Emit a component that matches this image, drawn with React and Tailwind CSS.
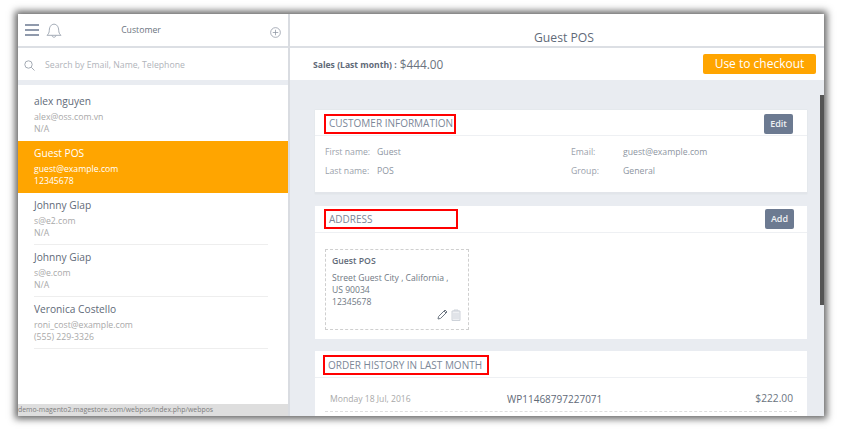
import React from "react";

const customers = [
  { name: "alex nguyen", email: "alex@oss.com.vn", phone: "N/A" },
  { name: "Guest POS", email: "guest@example.com", phone: "12345678", active: true },
  { name: "Johnny Glap", email: "s@e2.com", phone: "N/A", line: true },
  { name: "Johnny Giap", email: "s@e.com", phone: "N/A", line: true },
  { name: "Veronica Costello", email: "roni_cost@example.com", phone: "(555) 229-3326", line: true },
];

function CustomerRow({ c }) {
  return (
    <div className={`h-[52px] shrink-0 pl-[16px] pt-[4px] ${c.active ? "bg-[#ffa500] text-white" : "bg-white"}`}>
      <div className={`h-[48px] w-[234px] ${c.line ? "border-b border-[#eeeeee]" : ""}`}>
        <div className={`text-[10.2px] leading-[16px] ${c.active ? "text-white" : "text-[#5f6a78]"}`}>{c.name}</div>
        <div className={`mt-[2px] text-[8.7px] leading-[12px] ${c.active ? "text-white" : "text-[#a9a9a9]"}`}>{c.email}</div>
        <div className={`text-[8.7px] leading-[12px] ${c.active ? "text-white" : "text-[#a9a9a9]"}`}>{c.phone}</div>
      </div>
    </div>
  );
}

function Title({ w, children }) {
  return (
    <div className={`ml-[9px] flex h-[20px] items-center border-2 border-[#ff0000] pl-[3px] text-[10px] whitespace-nowrap text-[#7b8798] ${w}`}>
      {children}
    </div>
  );
}

function Btn({ children }) {
  return (
    <div className="flex h-[20px] w-[29px] items-center justify-center rounded-[2px] bg-[#6c7a91] text-[9px] font-semibold text-[#eef0f3]">
      {children}
    </div>
  );
}

function Field({ label, value, labelW }) {
  return (
    <div className="flex text-[8.7px] leading-[19px]">
      <span className={`${labelW} text-[#9aa1ab]`}>{label}</span>
      <span className="text-[#8d95a1]">{value}</span>
    </div>
  );
}

export default function App() {
  return (
    <div className="h-[430px] w-[842px] overflow-hidden bg-white pl-[18px] pt-[14px]" style={{ fontFamily: '"Open Sans", sans-serif' }}>
      <div className="flex h-[402px] w-[806px] bg-white shadow-[0_0_7px_3px_#666666]">
        {/* left column */}
        <div className="relative flex w-[270px] shrink-0 flex-col overflow-hidden bg-white">
          <div className="flex h-[34px] shrink-0 items-center border-b-2 border-[#dcdfe4]">
            <svg width="14" height="12" viewBox="0 0 14 12" className="ml-[7px] text-[#6c7a91]">
              <path d="M0 1h14M0 6h14M0 11h14" stroke="currentColor" strokeWidth="1.3" fill="none" />
            </svg>
            <svg width="16" height="15" viewBox="0 0 16 15" className="ml-[7px] text-[#9aa3af]">
              <path d="M1 12.300c1.500-1.300 2.200-2.600 2.300-5C3.400 3.600 5.300 1.200 8 1.200s4.600 2.400 4.700 6.100c.1 2.400.8 3.700 2.300 5H1zM6 12.500c.2 1.100 1 1.700 2 1.700s1.800-.6 2-1.700" stroke="currentColor" strokeWidth="0.9" fill="none" />
            </svg>
            <span className="ml-[59px] w-[40px] pt-[2px] text-center text-[8.7px] whitespace-nowrap text-[#6b7480]">Customer</span>
            <svg width="11" height="11" viewBox="0 0 12 12" className="ml-[109px] mt-[4px] text-[#8a93a1]">
              <circle cx="6" cy="6" r="5.300" stroke="currentColor" strokeWidth="0.8" fill="none" />
              <path d="M6 3v6M3 6h6" stroke="currentColor" strokeWidth="0.8" fill="none" />
            </svg>
          </div>
          <div className="flex h-[32px] shrink-0 items-center pt-[2px]">
            <svg width="11" height="11" viewBox="0 0 11 11" className="ml-[6px] text-[#9aa1ab]">
              <circle cx="4.500" cy="4.500" r="3.700" stroke="currentColor" strokeWidth="0.9" fill="none" />
              <path d="M7.300 7.300L10.500 10.500" stroke="currentColor" strokeWidth="0.9" fill="none" />
            </svg>
            <span className="ml-[10px] pt-[2px] text-[8.7px] text-[#b0b4ba]">Search by Email, Name, Telephone</span>
          </div>
          <div className="h-[5px] shrink-0 bg-[#e9ecf1]" />
          <div className="h-[4px] shrink-0" />
          {customers.map((c) => (
            <CustomerRow key={c.name} c={c} />
          ))}
          <div className="absolute bottom-0 left-0 h-[12px] w-[270px] bg-[#dedede] text-[6.9px] leading-[12px] whitespace-nowrap text-[#7d7d7d]">
            demo-magento2.magestore.com/webpos/index.php/webpos
          </div>
        </div>

        {/* right column */}
        <div className="relative flex min-w-0 flex-1 flex-col overflow-hidden border-l-2 border-[#d9dce1] bg-[#e9ecf1]">
          <div className="flex h-[34px] shrink-0 items-end justify-center border-b-2 border-[#dcdfe4] bg-white pl-[14px] text-[12.2px] leading-[16px] text-[#5f6a78]">
            Guest POS
          </div>
          <div className="flex h-[32px] shrink-0 items-center justify-between bg-white pl-[23px] pr-[8px]">
            <div className="flex items-center pt-[2px]">
              <span className="text-[8.6px] font-bold text-[#5f6a78]">Sales (Last month) :</span>
              <span className="ml-[3px] text-[11.8px] text-[#6b7480]">$444.00</span>
            </div>
            <div className="flex h-[20px] w-[113px] items-center justify-center rounded-[2px] bg-[#ffa500] text-[12px] text-white">
              Use to checkout
            </div>
          </div>
          <div className="flex flex-col gap-[12px] pl-[25px] pt-[30px]">
            <div className="h-[84px] w-[492px] shrink-0 border-b-2 border-[#e2e5ea] bg-white shadow-[0_0_1px_#d5d8dd]">
              <div className="flex h-[26px] items-center justify-between border-b border-[#eef0f3] pr-[14px] pt-[2px]">
                <Title w="w-[132px]">CUSTOMER INFORMATION</Title>
                <Btn>Edit</Btn>
              </div>
              <div className="flex pl-[10px] pt-[7px]">
                <div className="w-[246px]">
                  <Field label="First name:" value="Guest" labelW="w-[52px]" />
                  <Field label="Last name:" value="POS" labelW="w-[52px]" />
                </div>
                <div>
                  <Field label="Email:" value="guest@example.com" labelW="w-[52px]" />
                  <Field label="Group:" value="General" labelW="w-[52px]" />
                </div>
              </div>
            </div>
            <div className="h-[133px] w-[492px] shrink-0 bg-white">
              <div className="flex h-[27px] items-center justify-between border-b border-[#eef0f3] pr-[13px]">
                <Title w="w-[134px] h-[18px]">ADDRESS</Title>
                <Btn>Add</Btn>
              </div>
              <div className="ml-[10px] mt-[16px] h-[81px] w-[144px] border border-dashed border-[#cfcfcf] pl-[6px] pt-[5px]">
                <div className="text-[8.7px] leading-[13px] font-semibold text-[#5f6a78]">Guest POS</div>
                <div className="mt-[4px] text-[8.6px] leading-[12px] text-[#6f7883]">
                  Street Guest City , California ,
                  <br />
                  US 90034
                  <br />
                  12345678
                </div>
                <div className="mt-[1px] flex justify-end gap-[3px] pr-[7px]">
                  <svg width="11" height="11" viewBox="0 0 11 11" className="text-[#6f7883]">
                    <path d="M1 10l.6-2.600L8 1l2 2-6.400 6.400L1 10zM7 2l2 2" stroke="currentColor" strokeWidth="1" fill="none" />
                  </svg>
                  <svg width="10" height="12" viewBox="0 0 10 12" className="text-[#cdd2d9]">
                    <path d="M1 2h8v9.500H1zM3 2V1h4v1" stroke="currentColor" strokeWidth="1" fill="#eef0f3" />
                    <path d="M3 4v6M5 4v6M7 4v6" stroke="currentColor" strokeWidth="0.8" fill="none" />
                  </svg>
                </div>
              </div>
            </div>
            <div className="h-[80px] w-[492px] shrink-0 bg-white">
              <div className="flex h-[27px] items-center border-b border-[#eef0f3] pt-[2px]">
                <div className="-ml-[1px]">
                  <Title w="w-[166px] h-[18px]">ORDER HISTORY IN LAST MONTH</Title>
                </div>
              </div>
              <div className="mx-[10px] flex h-[34px] items-center border-b border-dashed border-[#dddddd] pl-[5px] pr-[4px] pt-[9px]">
                <span className="w-[177px] text-[8.6px] text-[#a9a9a9]">Monday 18 Jul, 2016</span>
                <span className="text-[10px] text-[#5f6a78]">WP11468797227071</span>
                <span className="ml-auto text-[10.2px] text-[#6b7480]">$222.00</span>
              </div>
            </div>
          </div>
          <div className="absolute right-0 top-[81px] h-[210px] w-[4px] bg-[#555555]" />
        </div>
      </div>
    </div>
  );
}
